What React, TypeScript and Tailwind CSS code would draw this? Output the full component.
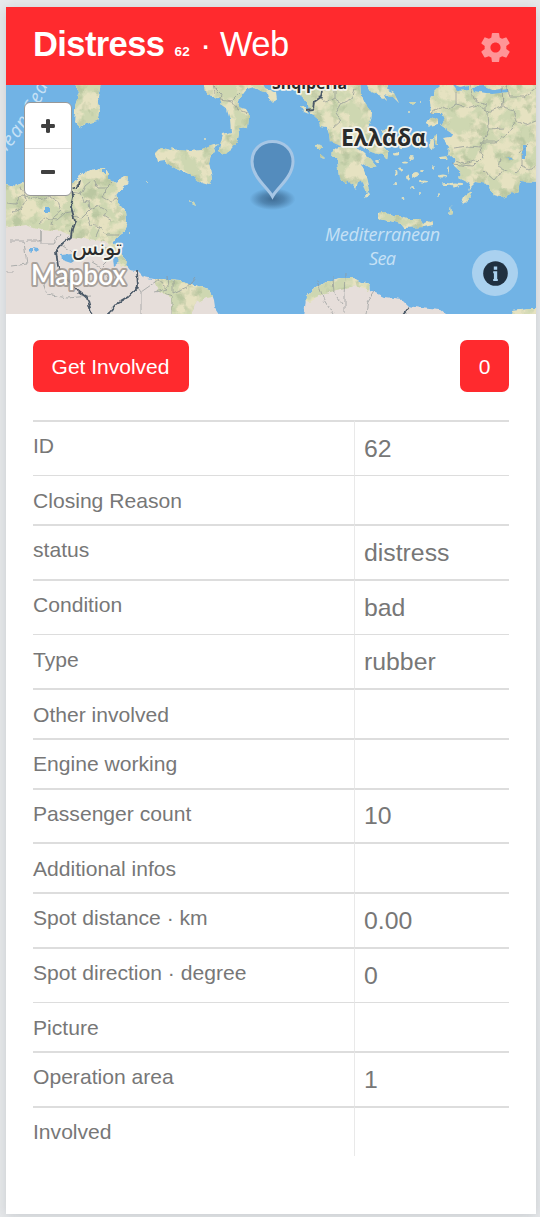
type Row = { label: string; value?: string; height: string; thin?: boolean; low?: boolean; high?: boolean };

const rows: Row[] = [
  { label: "ID", value: "62", height: "h-[55px]" },
  { label: "Closing Reason", height: "h-[49px]", thin: true },
  { label: "status", value: "distress", height: "h-[55px]" },
  { label: "Condition", value: "bad", height: "h-[55px]" },
  { label: "Type", value: "rubber", height: "h-[54px]", thin: true },
  { label: "Other involved", height: "h-[50px]", low: true },
  { label: "Engine working", height: "h-[50px]" },
  { label: "Passenger count", value: "10", height: "h-[54px]", high: true },
  { label: "Additional infos", height: "h-[50px]", low: true },
  { label: "Spot distance · km", value: "0.00", height: "h-[55px]" },
  { label: "Spot direction · degree", value: "0", height: "h-[55px]" },
  { label: "Picture", height: "h-[49px]", thin: true },
  { label: "Operation area", value: "1", height: "h-[55px]" },
  { label: "Involved", height: "h-[50px]" },
];

const africa =
  "M0 183L15 186L25 182L50 184L72 182L78 178L85 172L95 169L103 168L109 172L109 180L117 183L123 176L128 176L127 184L120 190L116 195L118 203L126 212L127 223L123 233L117 237L112 243L117 247L121 254L127 260L126 265L130 270L137 271L143 277L153 279L162 279L180 280L197 286L210 289L214 300L215 307L222 318L0 318Z";
const cyrenaica =
  "M304 318L306 297L313 290L325 282L340 278L352 278L363 282L369 284L370 290L385 297L402 299L409 306L420 308L440 310L450 318Z";
const north = [
  "M73 82L79 92L75 105L75 113L74 121L80 128L86 124L93 122L97 121L100 108L98 98L101 82Z",
  "M155 154L161 148L171 150L174 147L177 150L190 151L201 150L212 146L218 144L211 155L209 163L212 178L209 185L202 183L194 177L184 173L173 167L164 161L157 162Z",
  "M204 82L207 95L212 96L220 99L223 107L227 110L230 120L231 132L223 134L220 145L219 151L225 154L231 150L237 143L239 134L238 128L248 127L249 114L246 109L238 107L240 98L247 89L254 87L261 91L268 93L270 100L274 104L277 100L276 93L265 88L262 82Z",
  "M292 82L295 88L300 96L308 102L309 110L313 115L319 120L320 127L327 128L329 134L330 142L342 146L356 143L365 149L376 152L382 154L387 160L388 152L382 145L377 139L372 132L368 126L371 120L372 113L366 105L361 95L360 82Z",
  "M330 153L336 148L345 146L356 147L363 152L371 160L376 166L370 168L361 163L365 173L369 190L367 194L362 179L358 181L356 190L353 186L348 179L346 183L339 178L337 160Z",
  "M366 82L371 92L384 98L387 101L384 94L393 97L399 103L394 93L386 89L390 82Z",
  "M444 82L434 92L430 102L431 113L442 113L445 119L441 125L452 133L450 138L443 139L449 147L448 154L455 160L452 165L462 174L458 178L470 184L468 190L476 182L489 184L493 195L503 198L513 193L518 191L520 181L540 182L540 82Z",
  "M425 122L432 117L438 120L438 125L430 127Z",
  "M434 136L438 135L438 145L435 143Z M440 158L446 156L448 160L441 160Z",
  "M461 203L464 196L472 191L471 197L464 204Z",
  "M378 213L386 212L393 216L402 216L410 219L420 219L423 224L432 220L433 225L424 227L404 228L401 224L390 221L378 219Z",
  "M449 215L451 206L452 214Z M408 101L415 101L412 105Z M190 200L194 202L196 206L192 204Z",
  "M300 106L304 107L309 114L304 112Z M315 145L318 143L322 149L316 149Z M319 153L326 159L321 158Z",
  "M382 130L390 128L397 138L400 146L393 140L386 135Z M418 150L426 137L422 133Z",
  "M510 318L512 311L528 309L540 309L540 318Z",
];

const islands: [number, number, number, number][] = [
  [396, 154, 3, 1.5], [405, 162, 3, 1.5], [412, 158, 2, 2], [401, 169, 2, 1.5],
  [416, 175, 3, 3], [408, 177, 2, 2.5], [396, 174, 1.5, 3], [395, 184, 2, 1],
  [424, 182, 4, 1.5], [412, 187, 2, 1], [422, 171, 2, 1], [438, 196, 1, 2],
  [434, 168, 1, 2], [443, 176, 4, 1.5], [448, 170, 1, 3], [456, 184, 7, 1.5],
  [367, 196, 2, 2.5], [456, 186, 2, 2], [446, 184, 4, 1], [378, 162, 2, 1],
  [146, 182, 1, 1], [130, 232, 1, 1], [403, 198, 1.5, 1], [420, 193, 1, 1],
  [409, 112, 1, 1], [420, 102, 1, 1], [204, 138, 1, 1], [443, 158, 4, 1.5],
  [389, 142, 3, 2], [402, 147, 3, 2], [432, 144, 2, 5], [123, 265, 3, 2],
];

const borders = [
  "M6 203l10 1 5-8 9 2 8-2 6 4 6-3 8 5 3 9-7 6-2 9M21 186l5 14-5 8-8 5M45 218l-6 5M45 218l12 2 8-7 10-2M72 192l9 2 4-8 6-5M80 194l3 7 6 1 1 8 9-4 8 4-3 6 8 5M90 210l-8 8-9-2M93 181l5 7 9 0 6-6M107 188l-4 9 7 4 8-2M87 215l3 10 10 2 7 8 12 0M100 227l-4 9",
  "M10 241h14l3 23-16 2M27 241l14 0 0-9M41 232l0 12 12 0 7-10M6 272l8 0M35 262l12 32 20 4 25-2M60 244l12 8 0 10M92 262l10 6 8 14M110 258l-8 8",
  "M141 314l0-22 10-7 8-6M136 285l5 7M172 314l0-18-12-4M173 280l0 14 14-6 8-10M158 281l10 8-13 3M167 275l1 12",
  "M212 85l9 9-1 5 12 2 8-8M232 101l5 8 11 4M213 85l2 8",
  "M318 96l9 7 8-5 7 5-6 10 5 7-8 7M335 98l0-13M342 103l11-5 2-10",
  "M432 113l8-6 8 4 8-7 0-12M470 85l3 14 13 5 0 7M456 104l11 4 10-3 11 7 13-5 2-10M502 85l1 22 11 3 3 11 8 4 11-4M488 112l1 17-6 13M489 129l15-1M516 121l-10 14-11 7-13 0-2 5-12-1-14 2M481 147l2 9-10 10-22-2M456 160l9 4 9-3M484 171l10 9 6-7 9-4M506 85l4 12 14 0 12-9M519 154l9-10M515 172l7-6 0-12M521 166l8 4 7-4M500 159l-2 8 6 3",
  "M317 281l7 19 9 14M333 276l1 17 8 11M346 273l-1 24 0 17M375 290l-7 11-2 13",
];

function Gear() {
  return (
    <svg viewBox="2 2 20 20" className="h-[29px] w-[29px] fill-white/50">
      <path d="M19.43 12.98c.04-.32.07-.64.07-.98s-.03-.66-.07-.98l2.11-1.65c.19-.15.24-.42.12-.64l-2-3.46c-.12-.22-.39-.3-.61-.22l-2.49 1c-.52-.4-1.08-.73-1.69-.98l-.38-2.65C14.46 2.18 14.25 2 14 2h-4c-.25 0-.46.18-.49.42l-.38 2.65c-.61.25-1.17.59-1.69.98l-2.49-1c-.23-.09-.49 0-.61.22l-2 3.46c-.13.22-.07.49.12.64l2.11 1.65c-.04.32-.07.65-.07.98s.03.66.07.98l-2.11 1.65c-.19.15-.24.42-.12.64l2 3.46c.12.22.39.3.61.22l2.49-1c.52.4 1.08.73 1.69.98l.38 2.65c.03.24.24.42.49.42h4c.25 0 .46-.18.49-.42l.38-2.65c.61-.25 1.17-.59 1.69-.98l2.49 1c.23.09.49 0 .61-.22l2-3.46c.12-.22.07-.49-.12-.64l-2.11-1.65zM12 15.5c-1.93 0-3.5-1.57-3.5-3.5s1.57-3.5 3.5-3.5 3.5 1.57 3.5 3.5-1.57 3.5-3.5 3.5z" />
    </svg>
  );
}

function MapCanvas() {
  return (
    <svg viewBox="6 85 530 229" className="block h-[229px] w-[530px]">
      <defs>
        <filter id="coast" x="0" y="80" width="545" height="240" filterUnits="userSpaceOnUse" colorInterpolationFilters="sRGB">
          <feTurbulence type="fractalNoise" baseFrequency="0.14" numOctaves="2" seed="4" />
          <feDisplacementMap in="SourceGraphic" scale="5" xChannelSelector="R" yChannelSelector="G" />
        </filter>
        <filter id="forest" x="0" y="80" width="545" height="240" filterUnits="userSpaceOnUse" colorInterpolationFilters="sRGB">
          <feTurbulence type="fractalNoise" baseFrequency="0.06" numOctaves="3" seed="9" result="n" />
          <feColorMatrix in="n" values="0 0 0 0 0.8  0 0 0 0 0.84  0 0 0 0 0.69  8 0 0 0 -3.5" result="c" />
          <feComposite in="c" in2="SourceGraphic" operator="in" />
        </filter>
        <filter id="hills" x="0" y="80" width="545" height="240" filterUnits="userSpaceOnUse" colorInterpolationFilters="sRGB">
          <feTurbulence type="fractalNoise" baseFrequency="0.08" numOctaves="3" seed="21" result="n" />
          <feColorMatrix in="n" values="0 0 0 0 0.69  0 0 0 0 0.75  0 0 0 0 0.6  0 5 0 0 -2.7" result="c" />
          <feComposite in="c" in2="SourceGraphic" operator="in" />
        </filter>
        <radialGradient id="pinShadow">
          <stop offset="0" stopColor="#24476a" stopOpacity=".65" />
          <stop offset=".5" stopColor="#24476a" stopOpacity=".42" />
          <stop offset="1" stopColor="#24476a" stopOpacity="0" />
        </radialGradient>
        <clipPath id="maghreb">
          <path d={africa} />
        </clipPath>
        <clipPath id="cyr">
          <path d={cyrenaica} />
        </clipPath>
        <g id="green">
          {north.map((d) => (
            <path key={d} d={d} />
          ))}
          <path clipPath="url(#maghreb)" d="M0 160H135V235L112 244L96 240L72 237L60 231L40 230L25 225L0 228Z" />
          <path clipPath="url(#maghreb)" d="M112 240L128 262L134 270L117 262L103 250ZM153 276L222 286L218 296L205 298L195 304L190 318L172 318L171 298L158 292Z" />
          <path clipPath="url(#cyr)" d="M304 300L312 285L340 275L372 280L368 291L356 286L340 289L325 293L310 302Z" />
        </g>
      </defs>
      <rect x="6" y="85" width="530" height="229" fill="#71b3e5" />
      <g filter="url(#coast)">
        <g fill="#e6deda">
          <path d={africa} />
          <path d={cyrenaica} />
        </g>
        <use href="#green" fill="#e6e2c1" />
        {islands.map(([x, y, rx, ry]) => (
          <ellipse key={`${x}-${y}`} cx={x} cy={y} rx={rx} ry={ry} fill="#e2e1bf" />
        ))}
        <use href="#green" filter="url(#forest)" opacity=".9" />
        <use href="#green" filter="url(#hills)" opacity=".65" />
        <g fill="#71b3e5">
          <path d="M32 246l6 1 2 3-4 3zM29 248l3 0 0 6-3-3zM61 255l10-1 8 4-8 5-9-3zM45 208h6v4h-6zM102 169h4v4h-4zM452 84l8 3 8-2 0 5-11 1zM472 87l12-1 10 4 14-2 0 4-16 2-18-3zM523 145l3 0 0 15-3 0zM506 157l6 1-2 2zM112 253l8 8-6 5z" />
        </g>
      </g>
      <g filter="url(#coast)" fill="none" stroke="#8f9595" strokeWidth=".8" opacity=".85">
        {borders.map((d) => (
          <path key={d} d={d} />
        ))}
      </g>
      <g filter="url(#coast)" fill="none" stroke="#4c5a68" strokeWidth="1.8" strokeLinejoin="round">
        <path d="M79 180l-1 6-6 2 1 9-2 10 4 14-3 8-1 8-8 6-7 8 2 15 8 11 12 14 9 7 5 18" />
        <path d="M137 271l1 16-9 9-12 7-8 9-2 4M322 91l-1 6-7 5-1 7-7 1M410 307l-6 8" />
      </g>
      <g fontFamily="Open Sans, sans-serif">
        <path id="westSea" d="M-6 165Q36 124 52 74" fill="none" />
        <text fontSize="19" fontStyle="italic" fill="#c6e1f5" letterSpacing="1.2">
          <textPath href="#westSea" startOffset="12">nean Sea</textPath>
        </text>
        <g fill="#c6e1f5" fontSize="18" fontStyle="italic">
          <text x="325" y="240.500" textLength="115">Mediterranean</text>
          <text x="369" y="265" textLength="27">Sea</text>
        </g>
        <g fill="#292b2b" stroke="#f5f5ee" strokeWidth="3.5" strokeLinejoin="round" paintOrder="stroke" fontWeight="600">
          <text x="272" y="89" fontSize="16" fontWeight="700" textLength="75" lengthAdjust="spacingAndGlyphs">Shqipëria</text>
          <text x="341" y="145.500" fontSize="22.500" fontWeight="700" textLength="85" lengthAdjust="spacingAndGlyphs">Ελλάδα</text>
          <text x="72" y="255" fontSize="22" fontWeight="400" textLength="50" lengthAdjust="spacingAndGlyphs" fontFamily="DejaVu Sans, sans-serif" direction="ltr">تونس</text>
          <text x="513" y="324" fontSize="16">مصر</text>
        </g>
      </g>
      <text
        x="31" y="285" fontFamily="Lato, sans-serif" fontWeight="600" fontSize="28" textLength="95"
        lengthAdjust="spacingAndGlyphs" fill="#fff" stroke="#9d9690" strokeOpacity=".85" strokeWidth="4" strokeLinejoin="round" paintOrder="stroke"
      >
        Mapbox
      </text>
      <ellipse cx="272.500" cy="199" rx="23" ry="11" fill="url(#pinShadow)" />
      <path
        d="M272.500 196.500C268 188 252 177 252 161.500C252 149 261.500 141.500 272.500 141.500C283.500 141.500 293 149 293 161.500C293 177 277 188 272.500 196.500Z"
        fill="#548cbd" stroke="#a6c6e5" strokeWidth="3"
      />
    </svg>
  );
}

export default function App() {
  return (
    <div className="h-[1217px] w-[540px] overflow-hidden bg-[#e7e9eb] pt-[7px] pl-[6px] font-['Liberation_Sans',Arial,sans-serif]">
      <main className="h-[1207px] w-[530px] bg-white shadow-[0_2px_12px_rgba(80,90,100,0.2)]">
        <header className="flex h-[78px] items-center justify-between bg-[#ff2a2e] pr-[26px] pl-[27px] text-white">
          <h1 className="mt-[4px] flex items-baseline text-[34.500px] leading-[40px] tracking-[-0.6px]">
            <b>Distress</b>
            <b className="ml-[10px] text-[13.500px] tracking-[0.3px]">62</b>
            <span className="ml-[10px] w-[20px] text-[34px]">·</span>
            <span>Web</span>
          </h1>
          <button className="mt-[3px]" aria-label="Settings">
            <Gear />
          </button>
        </header>

        <section className="relative h-[229px] overflow-hidden">
          <MapCanvas />
          <div className="absolute top-[17px] left-[18px] flex h-[94px] w-[48px] flex-col rounded-[6px] border border-[#989898] bg-white">
            <button className="flex h-[46px] items-center justify-center border-b border-[#ddd]" aria-label="Zoom in">
              <svg viewBox="0 0 14 14" className="h-[14px] w-[14px] fill-[#404040]">
                <path d="M5 1Q5 0 7 0T9 1V5H13Q14 5 14 7T13 9H9V13Q9 14 7 14T5 13V9H1Q0 9 0 7T1 5H5Z" />
              </svg>
            </button>
            <button className="flex h-[46px] items-center justify-center" aria-label="Zoom out">
              <span className="h-[4px] w-[14px] rounded-[1px] bg-[#404040]" />
            </button>
          </div>
          <button className="absolute top-[165px] left-[466px] flex h-[46px] w-[46px] items-center justify-center rounded-full bg-[#aad1ef]" aria-label="Map information">
            <svg viewBox="0 0 25 25" className="h-[25px] w-[25px]">
              <circle cx="12.500" cy="12.500" r="12.300" fill="#203040" />
              <path d="M10.800 5.500H14.200V8.700H10.800ZM10.500 10.300H14.200V18H14.800V20H10.200V18H10.900V12.300H10.200V10.300Z" fill="#aad1ef" />
            </svg>
          </button>
        </section>

        <div className="px-[27px] pt-[26px]">
          <div className="flex justify-between text-[21px] text-white">
            <button className="h-[52px] w-[156px] rounded-[7px] bg-[#ff2a2e] pt-px pr-px whitespace-nowrap">Get Involved</button>
            <button className="h-[52px] w-[49px] rounded-[7px] bg-[#ff2a2e] pt-px">0</button>
          </div>
          <dl className="mt-[28px] w-[476px] text-[#777]">
            {rows.map(({ label, value, height, thin, low, high }) => (
              <div key={label} className={`flex ${height}`}>
                <dt className={`w-[321px] border-[#ddd] text-[21.100px] leading-[24px] ${thin ? "border-t pt-[13px]" : low ? "border-t-2 pt-[13px]" : "border-t-2 pt-[12px]"}`}>
                  {label}
                </dt>
                <dd className={`flex-1 border-l border-t-[#ddd] border-l-[#e9e9e9] pl-[9px] text-[24.800px] leading-[28px] ${thin ? "border-t pt-[13px]" : high ? "border-t-2 pt-[12px]" : "border-t-2 pt-[13px]"}`}>
                  {value}
                </dd>
              </div>
            ))}
          </dl>
        </div>
      </main>
    </div>
  );
}
